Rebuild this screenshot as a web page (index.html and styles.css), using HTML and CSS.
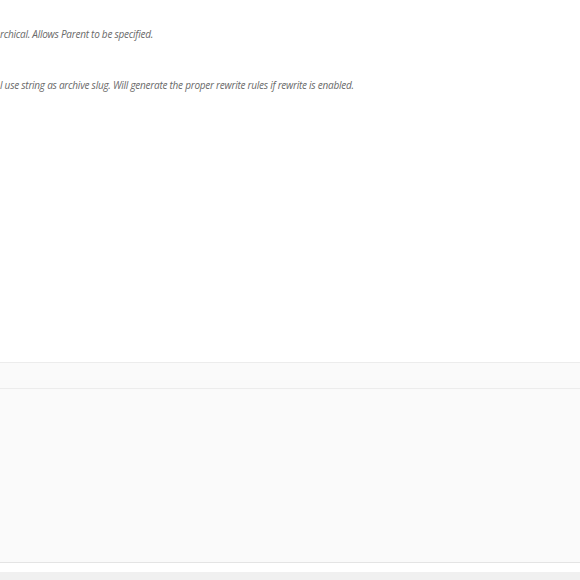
FILE: index.html
```html
<!DOCTYPE html>
<html>
<head>
<meta charset="utf-8">
<link rel="stylesheet" href="styles.css">
</head>
<body>
<div class="page">
  <div class="settings">
    <div class="row row-first">
      <p class="description">rchical. Allows Parent to be specified.</p>
    </div>
    <div class="row row-second">
      <p class="description">l use string as archive slug. Will generate the proper rewrite rules if rewrite is enabled.</p>
    </div>
  </div>
  <div class="postbox">
    <div class="postbox-header"></div>
    <div class="postbox-inside"></div>
  </div>
  <div class="footer"></div>
</div>
</body>
</html>
```
FILE: styles.css
```css
html, body {
  margin: 0;
  padding: 0;
  background: #ffffff;
  overflow: hidden;
}
.page {
  width: 580px;
  height: 580px;
  display: flex;
  flex-direction: column;
  font-family: "Open Sans", "Liberation Sans", sans-serif;
}
.settings {
  height: 362px;
  display: flex;
  flex-direction: column;
}
.row-first {
  padding-top: 27px;
}
.row-second {
  padding-top: 37px;
}
.description {
  margin: 0;
  font-size: 10px;
  letter-spacing: -0.25px;
  line-height: 14px;
  font-style: italic;
  color: #6a6a6a;
  white-space: nowrap;
}
.postbox {
  border-top: 1px solid #ececec;
  border-bottom: 1px solid #e4e4e4;
  background: #fafafa;
  display: flex;
  flex-direction: column;
}
.postbox-header {
  height: 25px;
  border-bottom: 1px solid #ececec;
}
.postbox-inside {
  height: 173px;
}
.footer {
  margin-top: 9px;
  flex: 1;
  background: #f0f0f0;
}
```
